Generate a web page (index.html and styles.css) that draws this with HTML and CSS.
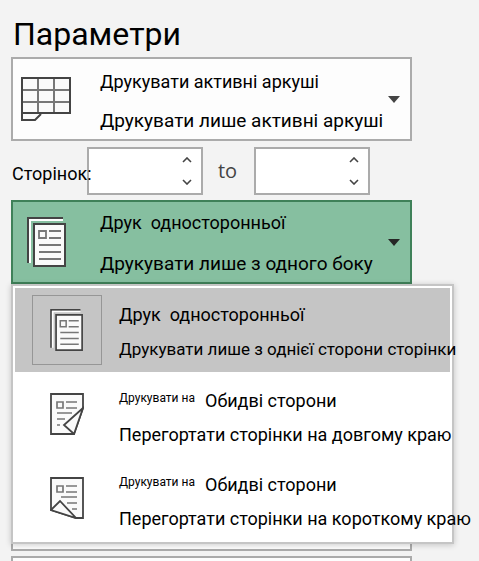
FILE: index.html
```html
<!DOCTYPE html>
<html lang="uk">
<head>
<meta charset="utf-8">
<title>Параметри</title>
<link rel="stylesheet" href="styles.css">
</head>
<body>
<svg class="defs" aria-hidden="true">
  <symbol id="pages" viewBox="0 0 40 50">
    <path d="M1 46V1H36" fill="none" stroke="#444" stroke-width="2"/>
    <path d="M3 46V3H36" fill="none" stroke="#fff" stroke-width="2"/>
    <path d="M7 7H38V49H7Z" fill="#fafafa" stroke="#444" stroke-width="2"/>
    <path d="M12 14h7v7h-7zM22 14h12M22 21h12M12 28h22M12 35h22M12 42h22" fill="none" stroke="#777" stroke-width="1.8"/>
  </symbol>
  <symbol id="chevron" viewBox="0 0 10 6"><path d="M1 5l4-4 4 4" fill="none" stroke="#444" stroke-width="1.6"/></symbol>
</svg>
<main class="settings">
  <h1 class="title">Параметри</h1>
  <button class="picker" type="button">
    <svg class="icon-sheet" viewBox="0 0 50 44" aria-hidden="true">
      <path d="M1 37V43H14L20 37" fill="#fafafa" stroke="#444" stroke-width="2"/>
      <path d="M1 1H49V36H1Z" fill="#fafafa"/>
      <path d="M17 1V36M33 1V36M1 13H49M1 25H49" stroke="#777" stroke-width="2"/>
      <path d="M1 1H49V36H1Z" fill="none" stroke="#444" stroke-width="2"/>
    </svg>
    <span class="lines"><span class="name">Друкувати активні аркуші</span><span class="hint">Друкувати лише активні аркуші</span></span>
    <span class="arrow"></span>
  </button>
  <div class="range">
    <label class="range-label" for="from">Сторінок:</label>
    <span class="spin">
      <input id="from" type="text">
      <span class="steps"><button type="button" aria-label="Більше"><svg><use href="#chevron"/></svg></button><button class="down" type="button" aria-label="Менше"><svg><use href="#chevron"/></svg></button></span>
    </span>
    <label class="to" for="until">to</label>
    <span class="spin">
      <input id="until" type="text">
      <span class="steps"><button type="button" aria-label="Більше"><svg><use href="#chevron"/></svg></button><button class="down" type="button" aria-label="Менше"><svg><use href="#chevron"/></svg></button></span>
    </span>
  </div>
  <div class="sides">
    <button class="picker open" type="button" aria-expanded="true">
      <svg class="icon-pages" aria-hidden="true"><use href="#pages"/></svg>
      <span class="lines"><span class="name">Друк&nbsp; односторонньої</span><span class="hint">Друкувати лише з одного боку</span></span>
      <span class="arrow"></span>
    </button>
    <div class="menu">
      <button class="item selected" type="button">
        <span class="thumb"><svg class="icon-small" aria-hidden="true"><use href="#pages"/></svg></span>
        <span class="lines"><span class="name">Друк&nbsp; односторонньої</span><span class="hint">Друкувати лише з однієї сторони сторінки</span></span>
      </button>
      <button class="item" type="button">
        <span class="thumb"><svg class="icon-small" viewBox="0 0 34 42" aria-hidden="true">
          <path d="M1 1H33V15L24 41H1Z" fill="#fafafa" stroke="#444" stroke-width="1.8"/>
          <path d="M7 9h6v6h-6zM16 9h11M16 15h11M7 20h15M7 26h8M7 32h3" fill="none" stroke="#777" stroke-width="1.7"/>
          <path d="M33 15L14 32L24 41Z" fill="#fafafa" stroke="#444" stroke-width="1.8"/>
        </svg></span>
        <span class="lines"><span class="name"><small>Друкувати на</small>Обидві сторони</span><span class="hint">Перегортати сторінки на довгому краю</span></span>
      </button>
      <button class="item" type="button">
        <span class="thumb"><svg class="icon-small" viewBox="0 0 34 42" aria-hidden="true">
          <path d="M1 1H33V41H26L1 33Z" fill="#fafafa" stroke="#444" stroke-width="1.8"/>
          <path d="M7 9h6v6h-6zM16 9h11M16 15h11M11 20h16M17 26h10M22 32h5" fill="none" stroke="#777" stroke-width="1.7"/>
          <path d="M1 33L10 24L26 41Z" fill="#fafafa" stroke="#444" stroke-width="1.8"/>
        </svg></span>
        <span class="lines"><span class="name"><small>Друкувати на</small>Обидві сторони</span><span class="hint">Перегортати сторінки на короткому краю</span></span>
      </button>
    </div>
  </div>
  <button class="picker" type="button" aria-label="Порядок"></button>
  <button class="picker" type="button" aria-label="Орієнтація"></button>
  <button class="picker" type="button" aria-label="Папір"></button>
  <button class="picker" type="button" aria-label="Поля"></button>
</main>
</body>
</html>
```
FILE: styles.css
```css
* { box-sizing: border-box; }
body { margin: 0; background: #f3f3f3; color: #000; font-family: Roboto, sans-serif; }
button, input { font: inherit; color: inherit; border-radius: 0; margin: 0; }
button { padding: 0; border: 0; background: none; text-align: left; }
.defs { display: none; }
.settings { height: 100vh; overflow: hidden; padding: 14px 67px 0 11px; display: flex; flex-direction: column; gap: 5px; }
.title { margin: 0 2px -2px; font-size: 32px; line-height: 40px; font-weight: 400; }
.picker { display: flex; align-items: center; flex: none; width: 100%; height: 84px; border: 2px solid #ababab; background: #fdfdfd; padding: 0 10px 0 8px; white-space: nowrap; }
.picker.open { background: #86bfa0; border-color: #3f8159; color: #000; }
.icon-sheet { width: 50px; height: 44px; margin-right: 29px; flex: none; }
.icon-pages { width: 40px; height: 50px; margin: 0 33px 0 6px; flex: none; }
.lines { display: flex; flex-direction: column; flex: 1; min-width: 0; gap: 18px; padding-top: 6px; }
.open .lines { gap: 20px; padding-top: 4px; }
.name { font-size: 18px; line-height: 20px; }
.hint { font-size: 19px; line-height: 22px; }
.arrow { border: solid transparent; border-width: 7px 6px 0; border-top-color: #444; }
.open .arrow { border-top-color: #262626; }
.range { display: flex; align-items: center; margin-top: 1px; height: 48px; flex: none; }
.range-label { width: 76px; padding: 6px 0 0 1px; font-size: 18px; line-height: 20px; white-space: nowrap; position: relative; z-index: 1; }
.to { width: 51px; padding-right: 2px; text-align: center; font-size: 20px; line-height: 24px; color: #444; font-family: "Open Sans", sans-serif; }
.spin { display: flex; width: 116px; height: 48px; border: 2px solid #ababab; background: #fff; }
.spin input { flex: 1; min-width: 0; border: 0; padding: 0 6px; background: none; font-size: 18px; }
.steps { width: 28px; display: flex; flex-direction: column; }
.steps button { flex: 1; display: flex; align-items: center; justify-content: center; }
.steps svg { width: 10px; height: 6px; }
.down svg { transform: rotate(180deg); }
.sides { position: relative; flex: none; }
.menu { position: absolute; z-index: 2; top: 100%; left: 0; width: 443px; padding: 2px; border: 2px solid #c5c5c5; background: #fff; box-shadow: 0 1px 6px rgba(0, 0, 0, .2); }
.item { display: flex; align-items: center; width: 100%; height: 84px; padding-left: 17px; white-space: nowrap; }
.item .lines { gap: 13px; padding-top: 9px; }
.item.selected .lines { padding-top: 5px; }
.selected { background: #c5c5c5; }
.thumb { display: flex; align-items: center; justify-content: center; width: 70px; height: 70px; flex: none; margin-right: 17px; }
.selected .thumb { border: 1px solid #969696; }
.icon-small { width: 34px; height: 42px; }
.item small { display: inline-block; width: 86px; font-size: 12px; vertical-align: 5px; line-height: 12px; }
.item .hint { font-size: 18px; }
.item.selected .hint { font-size: 17px; }
```
